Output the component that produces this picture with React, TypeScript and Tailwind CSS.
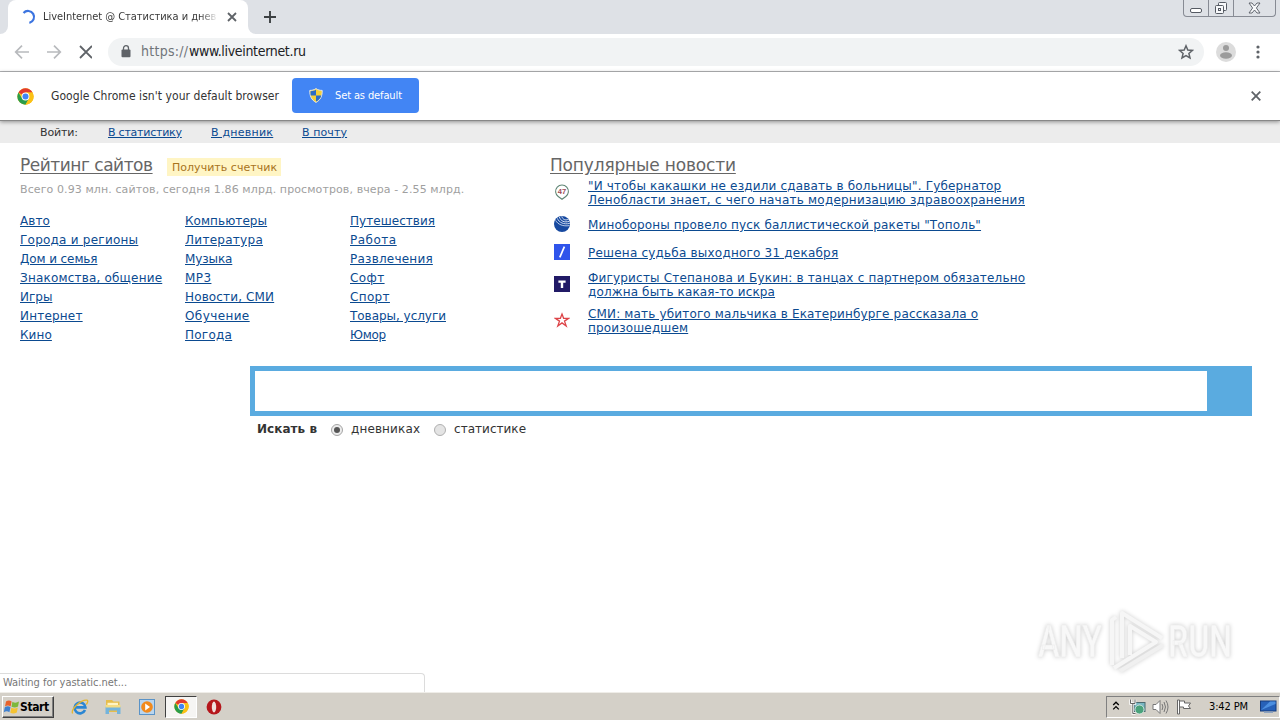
import React from "react";

type Link = { text: string; track: string };
type News = { lines: Link[]; icon: React.ReactNode; row: string };

const ChromeLogo: React.FC<{ size: number }> = ({ size }) => (
  <svg width={size} height={size} viewBox="0 0 48 48" className="shrink-0">
    <circle cx="24" cy="24" r="23" fill="#fbc116" />
    <path d="M24 24 L4.1 12.5 A23 23 0 0 1 43.9 12.5 L24 13 Z" fill="#e33b2e" />
    <path d="M4.1 12.5 A23 23 0 0 0 24 47 L34 29.5 L24 24 L14 29 Z" fill="#2a9d4a" />
    <path d="M24 47 A23 23 0 0 0 43.9 12.5 L24 12.5 L34 29.5 Z" fill="#fbc116" />
    <circle cx="24" cy="24" r="11" fill="#fff" />
    <circle cx="24" cy="24" r="8.5" fill="#4285f4" />
  </svg>
);

const categories: Link[][] = [
  [
    { text: "Авто", track: "tracking-[0.1px]" },
    { text: "Города и регионы", track: "tracking-[0.24px]" },
    { text: "Дом и семья", track: "tracking-[-0.1px]" },
    { text: "Знакомства, общение", track: "tracking-[0.19px]" },
    { text: "Игры", track: "tracking-[0px]" },
    { text: "Интернет", track: "tracking-[0.2px]" },
    { text: "Кино", track: "tracking-[0.1px]" },
  ],
  [
    { text: "Компьютеры", track: "tracking-[0.07px]" },
    { text: "Литература", track: "tracking-[0.28px]" },
    { text: "Музыка", track: "tracking-[-0.1px]" },
    { text: "MP3", track: "tracking-[0.4px]" },
    { text: "Новости, СМИ", track: "tracking-[0.14px]" },
    { text: "Обучение", track: "tracking-[0.4px]" },
    { text: "Погода", track: "tracking-[0.25px]" },
  ],
  [
    { text: "Путешествия", track: "tracking-[0.05px]" },
    { text: "Работа", track: "tracking-[0.5px]" },
    { text: "Развлечения", track: "tracking-[0.22px]" },
    { text: "Софт", track: "tracking-[0.4px]" },
    { text: "Спорт", track: "tracking-[0.35px]" },
    { text: "Товары, услуги", track: "tracking-[-0.03px]" },
    { text: "Юмор", track: "tracking-[-0.3px]" },
  ],
];

const news: News[] = [
  {
    row: "h-[36px]",
    lines: [
      { text: '"И чтобы какашки не ездили сдавать в больницы". Губернатор', track: "tracking-[0.18px]" },
      { text: "Ленобласти знает, с чего начать модернизацию здравоохранения", track: "tracking-[0.23px]" },
    ],
    icon: (
      <svg width="16" height="16" viewBox="0 0 16 16">
        <path d="M8 15.3 L4.2 12.5 A6.4 6.4 0 1 1 11.8 12.5 Z" fill="#fff" stroke="#5f8574" strokeWidth="1.1" />
        <text x="8" y="10" textAnchor="middle" fontSize="7.5" fontWeight="700" fontFamily="Liberation Sans, sans-serif" fill="#9c4a55">
          47
        </text>
      </svg>
    ),
  },
  {
    row: "h-[28px]",
    lines: [{ text: 'Минобороны провело пуск баллистической ракеты "Тополь"', track: "tracking-[0.15px]" }],
    icon: (
      <svg width="16" height="16" viewBox="0 0 16 16" fill="none">
        <circle cx="8" cy="8" r="8" fill="#1749a0" />
        <path d="M1.6 4.4 C4 8.5 9 10.6 15.4 9.6" stroke="#c9d8ee" strokeWidth="0.9" />
        <path d="M3.4 2.4 C5 6.6 10 8.8 15.8 7.4" stroke="#c9d8ee" strokeWidth="1" />
        <path d="M5.4 1 C6.5 5 10.5 7 15.4 5.2" stroke="#dce6f4" strokeWidth="1" />
        <path d="M7.8 0.4 C8.6 3.5 11.5 4.8 14.4 3.2" stroke="#dce6f4" strokeWidth="1" />
      </svg>
    ),
  },
  {
    row: "h-[28px]",
    lines: [{ text: "Решена судьба выходного 31 декабря", track: "tracking-[0.21px]" }],
    icon: (
      <svg width="16" height="16" viewBox="0 0 16 16">
        <rect width="16" height="16" fill="#2f54eb" />
        <path d="M5.8 13.4 L10.4 2.6" stroke="#fff" strokeWidth="1.7" />
      </svg>
    ),
  },
  {
    row: "h-[36px]",
    lines: [
      { text: "Фигуристы Степанова и Букин: в танцах с партнером обязательно", track: "tracking-[0.19px]" },
      { text: "должна быть какая-то искра", track: "tracking-[0.14px]" },
    ],
    icon: (
      <svg width="16" height="16" viewBox="0 0 16 16">
        <rect width="16" height="16" fill="#211a66" />
        <path d="M4.4 4.6 H11.6 V6.8 H9.2 V12 H6.8 V6.8 H4.4 Z" fill="#fff" />
      </svg>
    ),
  },
  {
    row: "h-[36px]",
    lines: [
      { text: "СМИ: мать убитого мальчика в Екатеринбурге рассказала о", track: "tracking-[0.16px]" },
      { text: "произошедшем", track: "tracking-[0.15px]" },
    ],
    icon: (
      <svg width="16" height="16" viewBox="0 0 16 16" fill="none" stroke="#dd4448" strokeWidth="1.3">
        <path d="M8 2 L9.6 6.3 H14.6 L10.5 9.1 L12.2 14 L8 10.9 L3.8 14 L5.5 9.1 L1.4 6.3 H6.4 Z" />
      </svg>
    ),
  },
];

const TabStrip: React.FC = () => (
  <div className="flex h-[34px] justify-between bg-[#dee1e6]">
    <div className="flex">
      <div className="flex w-2 items-end bg-white">
        <div className="h-full w-full rounded-br-lg bg-[#dee1e6]" />
      </div>
      <div className="bg-[#dee1e6]">
        <div className="flex h-[34px] w-[240px] items-center rounded-t-lg bg-white pl-3">
          <svg width="16" height="16" viewBox="0 0 16 16" fill="none">
            <path d="M8 2 A6 6 0 1 1 4.6 12.9" stroke="#3b74e0" strokeWidth="2.2" transform="rotate(-48 8 8)" />
          </svg>
          <div className="ml-[7px] w-[175px] overflow-hidden whitespace-nowrap bg-gradient-to-r from-[#333] from-90% to-transparent bg-clip-text pt-px text-[11px] tracking-[-0.03px] text-transparent">
            LiveInternet @ Статистика и днев
          </div>
          <svg width="10" height="10" viewBox="0 0 10 10" className="ml-[9px]">
            <path d="M1 1 L9 9 M9 1 L1 9" stroke="#5f6368" strokeWidth="1.8" />
          </svg>
        </div>
      </div>
      <div className="w-2 bg-white">
        <div className="h-full w-full rounded-bl-lg bg-[#dee1e6]" />
      </div>
      <svg width="12" height="12" viewBox="0 0 12 12" className="mt-[11px] ml-2">
        <path d="M6 0 V12 M0 6 H12" stroke="#3c4043" strokeWidth="1.9" />
      </svg>
    </div>
    <div className="mr-1 flex h-[17px] w-[93px] overflow-hidden rounded-b-[4px] border border-t-0 border-[#878b94]">
      <div className="flex w-[25px] items-end justify-center border-r border-[#878b94] pb-[3px]">
        <div className="h-[5px] w-3 rounded-[2px] border border-[#555a63] bg-white" />
      </div>
      <div className="flex w-[25px] items-center justify-center border-r border-[#878b94]">
        <svg width="14" height="14" viewBox="0 0 14 14" fill="#f7f8fa" stroke="#555a63">
          <rect x="4.5" y="1.5" width="8" height="8" rx="1" />
          <rect x="1.5" y="4.5" width="8" height="8" rx="1" />
          <rect x="4.5" y="7.5" width="2" height="2" />
        </svg>
      </div>
      <div className="flex flex-1 items-center justify-center">
        <svg width="13" height="12" viewBox="0 0 13 12">
          <path d="M1 1 H4 L6.5 4 L9 1 H12 L8.4 6 L12 11 H9 L6.5 8 L4 11 H1 L4.6 6 Z" fill="#f7f8fa" stroke="#555a63" strokeWidth="0.9" />
        </svg>
      </div>
    </div>
  </div>
);

const Toolbar: React.FC = () => (
  <div className="flex h-[38px] items-center border-b border-[#b4b5b8] bg-white pb-[2px]">
    <svg width="78" height="16" viewBox="0 0 78 16" fill="none" className="ml-[14px]">
      <g stroke="#b8babd" strokeWidth="1.7">
        <path d="M15 8 H2 M8 1.7 L1.7 8 L8 14.3" />
        <path d="M33 8 H46 M40 1.7 L46.3 8 L40 14.3" />
      </g>
      <path d="M66 2 L78 14 M78 2 L66 14" stroke="#5f6368" strokeWidth="1.8" />
    </svg>
    <div className="ml-4 flex h-7 w-[1096px] items-center rounded-full bg-[#f1f3f4]">
      <svg width="10" height="13" viewBox="0 0 10 13" className="ml-[13px]">
        <path d="M2.5 5 V3.2 A2.5 2.5 0 0 1 7.5 3.2 V5" fill="none" stroke="#5f6368" strokeWidth="1.3" />
        <rect x="0.5" y="4.6" width="9" height="7.6" rx="1" fill="#5f6368" />
      </svg>
      <div className="ml-[10px] flex-1 text-[14px]">
        <span className="inline-block w-12 tracking-[0.26px] text-[#70757a]">https://</span>
        <span className="tracking-[-0.32px] text-[#202124]">www.liveinternet.ru</span>
      </div>
      <svg width="16" height="16" viewBox="0 0 16 16" className="mr-[10px]">
        <path d="M8 1.8 L9.8 6 L14.4 6.4 L10.9 9.4 L12 13.9 L8 11.5 L4 13.9 L5.1 9.4 L1.6 6.4 L6.2 6 Z" fill="none" stroke="#5f6368" strokeWidth="1.5" />
      </svg>
    </div>
    <svg width="20" height="20" viewBox="0 0 20 20" className="ml-3">
      <circle cx="10" cy="10" r="10" fill="#dcdcdc" />
      <circle cx="10" cy="6" r="3" fill="#9b9b9b" />
      <ellipse cx="10" cy="13.5" rx="6" ry="3.2" fill="#9b9b9b" />
    </svg>
    <svg width="4" height="14" viewBox="0 0 4 14" className="ml-5" fill="#5f6368">
      <circle cx="2" cy="2" r="1.6" />
      <circle cx="2" cy="7" r="1.6" />
      <circle cx="2" cy="12" r="1.6" />
    </svg>
  </div>
);

const InfoBar: React.FC = () => (
  <div className="relative flex h-[49px] items-center border-b border-[#888] bg-white shadow-[0_1px_4px_rgba(0,0,0,0.4)]">
    <div className="ml-[17px]">
      <ChromeLogo size={17} />
    </div>
    <div className="ml-[17px] w-[241px] whitespace-nowrap text-[12px] tracking-[0.06px] text-[#333]">
      Google Chrome isn't your default browser
    </div>
    <div className="-mt-px flex h-[35px] w-[127px] items-center rounded-[4px] bg-[#4285f4]">
      <svg width="14" height="15" viewBox="0 0 14 15" className="ml-[17px]">
        <path d="M7 0.6 C9 2 11 2.4 13.2 2.4 C13.4 8 11.5 12 7 14.4 C2.5 12 0.6 8 0.8 2.4 C3 2.4 5 2 7 0.6 Z" fill="#f4d03a" stroke="#dfe6ee" />
        <path d="M7 1.8 V7.5 H1.7 C1.5 6 1.4 4.6 1.5 3.2 C3.7 3.1 5.3 2.8 7 1.8 Z" fill="#2a6cc8" />
        <path d="M7 7.5 H12.3 C11.6 10.2 9.8 12.2 7 13.6 Z" fill="#2a6cc8" />
      </svg>
      <span className="ml-3 pt-0.5 text-[11px] tracking-[-0.12px] text-white">Set as default</span>
    </div>
    <svg width="10" height="10" viewBox="0 0 10 10" className="ml-auto mr-[19px]">
      <path d="M0.7 0.7 L9.3 9.3 M9.3 0.7 L0.7 9.3" stroke="#5f6368" strokeWidth="1.8" />
    </svg>
  </div>
);

const Page: React.FC = () => (
  <div className="flex flex-1 flex-col bg-white font-['DejaVu_Sans',sans-serif] text-[#0b4a90]">
    <div className="flex h-[22px] items-center bg-[#ececec] pt-0.5 pl-10 text-[11px]">
      <span className="w-[68px] tracking-[-0.14px] text-[#333]">Войти:</span>
      <a className="w-[103px] tracking-[-0.23px] underline underline-offset-1">В статистику</a>
      <a className="w-[91px] tracking-[0.24px] underline underline-offset-1">В дневник</a>
      <a className="tracking-[0.1px] underline underline-offset-1">В почту</a>
    </div>
    <div className="flex h-[223px] pl-5">
      <div className="w-[530px]">
        <div className="flex h-[45px] items-start pt-[11px]">
          <a className="w-[147px] text-[17px] leading-[22px] tracking-[-0.48px] whitespace-nowrap text-[#666] underline underline-offset-2">
            Рейтинг сайтов
          </a>
          <span className="mt-1 h-[18px] w-[114px] bg-[#fff5c4] pl-[5px] text-[11px] leading-[19px] tracking-[0.03px] whitespace-nowrap text-[#a8731c]">
            Получить счетчик
          </span>
        </div>
        <div className="-mt-1 h-3 text-[11px] leading-3 tracking-[0.1px] whitespace-nowrap text-[#a0a0a0]">
          Всего 0.93 млн. сайтов, сегодня 1.86 млрд. просмотров, вчера - 2.55 млрд.
        </div>
        <div className="mt-4 flex text-[12px] leading-[19px]">
          {categories.map((column, index) => (
            <div key={index} className="w-[165px]">
              {column.map(({ text, track }) => (
                <div key={text} className="whitespace-nowrap">
                  <a className={`underline underline-offset-1 ${track}`}>{text}</a>
                </div>
              ))}
            </div>
          ))}
        </div>
      </div>
      <div>
        <div className="h-[31px] pt-[11px] text-[17px] leading-[22px] tracking-[-0.17px] text-[#666]">
          <a className="underline underline-offset-2">Популярные новости</a>
        </div>
        {news.map(({ lines, icon, row }, index) => (
          <div key={index} className={`flex items-center pl-1 ${row}`}>
            {icon}
            <div className="ml-[18px] pt-0.5 text-[12px] leading-[14px] whitespace-nowrap">
              {lines.map(({ text, track }) => (
                <div key={text}>
                  <a className={`underline underline-offset-1 ${track}`}>{text}</a>
                </div>
              ))}
            </div>
          </div>
        ))}
      </div>
    </div>
    <div className="ml-[250px] h-[50px] w-[1002px] border-[5px] border-r-[45px] border-[#5aabe0]" />
    <div className="ml-[257px] flex h-[26px] items-center text-[12px] text-[#333]">
      <span className="w-[74px] font-bold tracking-[0.05px]">Искать в</span>
      <span className="mt-0.5 flex size-3 items-center justify-center rounded-full border border-[#a5a5a5] bg-[#ececec]">
        <span className="size-1.5 rounded-full bg-[#555]" />
      </span>
      <span className="ml-2 w-[83px] tracking-[0.13px]">дневниках</span>
      <span className="mt-0.5 size-3 rounded-full border border-[#b0b0b0] bg-[#e4e4e4]" />
      <span className="ml-2 tracking-[0.03px]">статистике</span>
    </div>
    <div className="mt-auto flex h-[83px] justify-between">
      <div className="mt-auto flex h-[19px] w-[425px] items-center rounded-tr-[4px] border-t border-r border-[#dcdcdc] pt-px pl-[3px] font-['DejaVu_Sans_Condensed',sans-serif] text-[11px] tracking-[-0.03px] text-[#777]">
        Waiting for yastatic.net...
      </div>
      <Watermark />
    </div>
  </div>
);

const Watermark: React.FC = () => (
  <svg width="210" height="68" viewBox="0 0 210 68" className="mr-[40px] shrink-0 overflow-visible drop-shadow-[0_0_2px_rgba(0,0,0,0.2)]">
    <g fontFamily="Roboto, sans-serif" fontSize="45" fontWeight="500" fill="#f8f8f8" stroke="#ededed" strokeWidth="0.6">
      <text x="8" y="48" textLength="64" lengthAdjust="spacingAndGlyphs">
        ANY
      </text>
      <text x="138" y="48" textLength="64" lengthAdjust="spacingAndGlyphs">
        RUN
      </text>
    </g>
    <g fill="none" stroke="#f6f6f6" strokeWidth="4" strokeLinejoin="round">
      <path d="M82 56 V11 L86 8" />
      <path d="M92 49 V4 L132 29" />
      <path d="M100 46 V17 L126 33 L84 59" />
      <path d="M90 62 L133 36" stroke="#f0f0f0" />
    </g>
  </svg>
);

const Taskbar: React.FC = () => (
  <div className="flex h-7 items-center border-t border-[#efede8] bg-[#d4d0c8] text-black">
    <div className="mt-px ml-[2px] flex h-[22px] w-[52px] items-center border border-t-white border-r-[#404040] border-b-[#404040] border-l-white shadow-[inset_-1px_-1px_0_#808080]">
      <svg width="17" height="16" viewBox="0 0 17 16" className="shrink-0">
        <path d="M3 2.5 C5 1 7 1.2 8.6 2.4 L7.6 7.4 C5.8 6.2 4 6.2 2 7.4 Z" fill="#e8622c" />
        <path d="M9.4 2.8 C11.5 4 13.5 4 16 2.6 L15 7.6 C12.8 9 10.5 8.8 8.5 7.8 Z" fill="#7db83a" />
        <path d="M1.8 8.3 C4 7 5.8 7 7.5 8.3 L6.4 13.2 C4.6 12 2.8 12 0.8 13.2 Z" fill="#3f80cf" />
        <path d="M8.3 8.8 C10.5 9.8 12.6 9.8 14.8 8.6 L13.8 13.4 C11.4 14.8 9.2 14.6 7.3 13.7 Z" fill="#f5c332" />
      </svg>
      <span className="text-[12px] font-bold tracking-[-0.4px]">Start</span>
    </div>
    <svg width="18" height="18" viewBox="0 0 18 18" fill="none" className="ml-[17px]">
      <path d="M14 12 A5.4 5.4 0 1 1 14.4 9.4 H4.5" stroke="#2b86d3" strokeWidth="2.6" />
      <path d="M1.6 15.5 C-0.5 11.5 10 1.5 15.8 2.2 C17.6 2.6 16.5 5 15.3 6.5" stroke="#e5b62f" strokeWidth="1.3" />
    </svg>
    <svg width="18" height="18" viewBox="0 0 18 18" className="ml-[15px]">
      <path d="M2 2 H8 L9.5 3.5 H15.5 V14 H2 Z" fill="#e6bd4c" />
      <path d="M3.5 4.8 H14 V10 H3.5 Z" fill="#fff4c4" />
      <path d="M1.5 8.5 H16.5 V16 H13 V12.5 H5 V16 H1.5 Z" fill="#74b4dc" />
      <path d="M1.5 7 H16.5 V9.5 H1.5 Z" fill="#f5dc83" />
    </svg>
    <svg width="16" height="16" viewBox="0 0 16 16" className="ml-[17px]">
      <rect x="0.5" y="0.5" width="15" height="15" fill="#b9d5ee" stroke="#5a93c7" />
      <circle cx="8" cy="8" r="5.8" fill="#f28a1c" />
      <path d="M6.2 4.6 L11 8 L6.2 11.4 Z" fill="#fff" />
    </svg>
    <div className="ml-[10px] flex h-[22px] w-[32px] items-center justify-center border border-t-[#404040] border-r-white border-b-white border-l-[#404040] bg-[#f6f5f3]">
      <ChromeLogo size={15} />
    </div>
    <svg width="16" height="16" viewBox="0 0 16 16" className="ml-[9px]">
      <ellipse cx="8" cy="8" rx="7.4" ry="7.6" fill="#b5161b" />
      <ellipse cx="8" cy="8" rx="2.2" ry="5.4" fill="#f0dedc" />
    </svg>
    <div className="mt-px ml-auto flex h-[22px] w-[174px] items-center border border-t-[#808080] border-r-white border-b-white border-l-[#808080]">
      <svg width="8" height="10" viewBox="0 0 8 10" fill="none" stroke="#000" strokeWidth="1.3" className="mb-0.5 ml-[5px]">
        <path d="M1.2 4 L4 1.2 L6.8 4 M1.2 8.4 L4 5.6 L6.8 8.4" />
      </svg>
      <svg width="17" height="16" viewBox="0 0 17 16" className="ml-[9px]">
        <rect x="5" y="3.5" width="11" height="9" fill="#78b7c2" stroke="#4a6a70" />
        <circle cx="10.5" cy="10.5" r="4.5" fill="#4aa27b" stroke="#e7efec" strokeWidth="0.8" />
        <path d="M1.5 0.5 V4.5 H6 V0.5 M3.8 4.5 V14.5 H6.5" fill="none" stroke="#fff" strokeWidth="2.4" />
        <path d="M1.5 0.5 V4.5 H6 V0.5 M3.8 4.5 V14.5 H6.5" fill="none" stroke="#555" strokeWidth="0.9" />
      </svg>
      <svg width="17" height="16" viewBox="0 0 17 16" fill="none" stroke="#777" strokeWidth="1" className="ml-[6px]">
        <path d="M1 5.5 H4 L8 1.5 V14.5 L4 10.5 H1 Z" fill="#fff" />
        <path d="M10 5 Q11.8 8 10 11 M12 3 Q15 8 12 13 M14 1.5 Q18 8 14 14.5" />
      </svg>
      <svg width="16" height="16" viewBox="0 0 16 16" fill="#fff" stroke="#666" className="ml-[7px]">
        <path d="M1.5 1 H3.5 V15 H1.5 Z" />
        <path d="M3.5 2 H8.5 V4 H14.5 L12.5 7 L14.5 9.5 H7.5 V8 H3.5 Z" />
      </svg>
      <span className="ml-[17px] w-[51px] pt-px text-[11px] tracking-[-0.14px] whitespace-nowrap">3:42 PM</span>
      <svg width="17" height="14" viewBox="0 0 17 14" className="shrink-0">
        <rect x="0.5" y="1" width="15.5" height="10" fill="#2761b8" stroke="#173c7c" />
        <path d="M1 10 L10 1.5 H15.5 V4 Z" fill="#4c8fe0" />
        <rect x="4" y="11.5" width="9" height="1.5" fill="#8fa4c0" />
      </svg>
    </div>
  </div>
);

const App: React.FC = () => {
  return (
    <div className="flex h-screen w-full flex-col overflow-hidden bg-white font-['DejaVu_Sans_Condensed','DejaVu_Sans',sans-serif]">
      <TabStrip />
      <Toolbar />
      <InfoBar />
      <Page />
      <Taskbar />
    </div>
  );
};

export default App;
